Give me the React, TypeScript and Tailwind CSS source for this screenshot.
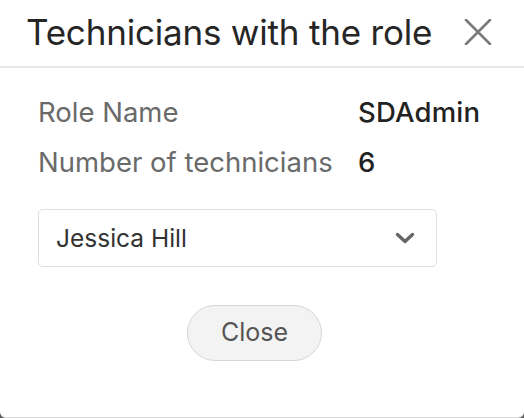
export default function App() {
  return (
    <div className="h-[418px] w-[524px] bg-[#5a5a5a]">
      <div
        className="flex h-[418px] w-[524px] flex-col rounded-b-[6px] border-b border-[#dcdcdc] bg-white"
        style={{ fontFamily: "Inter, 'Open Sans', sans-serif" }}
      >
        <div className="flex h-[68px] items-center justify-between border-b-2 border-[#e8e8e8] pb-[2px] pl-[26px] pr-[32px]">
          <h1 className="text-[35px] leading-none tracking-[-0.2px] text-[#262626]">Technicians with the role</h1>
          <svg width="28" height="26" viewBox="0 0 28 26" className="text-[#7a7a7a]">
            <path d="M2 1 L26 25 M26 1 L2 25" stroke="currentColor" strokeWidth="2.6" strokeLinecap="round" />
          </svg>
        </div>

        <div className="flex flex-col px-[38px] pt-[27px]">
          <div className="grid grid-cols-[320px_1fr] gap-y-[16px] text-[27.5px] leading-[34px]">
            <span className="text-[#6a6a6a]">Role Name</span>
            <span className="font-medium tracking-[0.2px] text-[#222]">SDAdmin</span>
            <span className="text-[#6a6a6a]">Number of technicians</span>
            <span className="font-medium text-[#222]">6</span>
          </div>

          <div className="mt-[30px] flex h-[58px] w-[399px] items-center justify-between rounded-[5px] border border-[#dedede] pl-[17px] pr-[21px]">
            <span className="text-[24.5px] text-[#333]">Jessica Hill</span>
            <svg width="20" height="12" viewBox="0 0 20 12" className="text-[#666]">
              <path d="M2.5 2.5 L10 9.5 L17.5 2.5" fill="none" stroke="currentColor" strokeWidth="3.4" strokeLinecap="round" strokeLinejoin="round" />
            </svg>
          </div>

          <div className="mt-[38px] flex pl-[149px]">
            <button className="h-[56px] w-[135px] rounded-full border border-[#d6d6d6] bg-[#f3f3f3] text-[25px] text-[#555]">
              Close
            </button>
          </div>
        </div>
      </div>
    </div>
  );
}
